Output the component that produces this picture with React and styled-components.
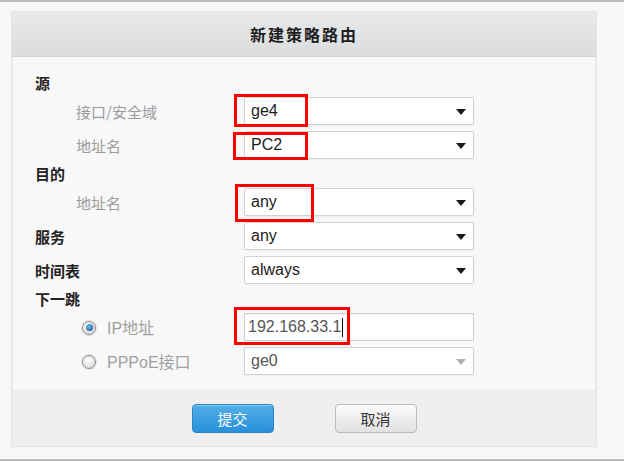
import React from 'react';
import styled, { createGlobalStyle } from 'styled-components';

const GlobalStyle = createGlobalStyle`
  html, body {
    margin: 0;
    padding: 0;
    background: #f7f7f7;
  }
  body {
    font-family: 'Liberation Sans', 'Noto Sans CJK SC', sans-serif;
  }
`;

const Page = styled.div`
  width: 624px;
  height: 461px;
  box-sizing: border-box;
  border-top: 2px solid #bdbdbd;
  border-bottom: 2px solid #bdbdbd;
  padding: 9px 0 0 11px;
  background: #f7f7f7;
`;

const Dialog = styled.div`
  width: 586px;
  height: 436px;
  box-sizing: border-box;
  border: 1px solid #e6e6e6;
  display: flex;
  flex-direction: column;
  background: #f8f8f8;
`;

const Header = styled.div`
  height: 44px;
  flex: none;
  display: flex;
  align-items: center;
  justify-content: center;
  background: linear-gradient(#e8e9eb, #dbdcde);
  border-bottom: 1px solid #d3d3d3;
  font-family: 'Noto Sans CJK SC', sans-serif;
  font-weight: 700;
  font-size: 16px;
  letter-spacing: 2px;
  color: #1e1e1e;
`;

const Body = styled.div`
  flex: 1;
  padding: 10px 0 0 22px;
  border-left: 1px solid #ececec;
  border-right: 1px solid #ececec;
`;

const SectionTitle = styled.div`
  height: ${p => p.$h}px;
  display: flex;
  align-items: center;
  font-family: 'Noto Sans CJK SC', sans-serif;
  font-weight: 700;
  font-size: 15px;
  color: #222;
`;

const FieldRow = styled.div`
  height: 28px;
  display: flex;
  align-items: center;

  & + & {
    margin-top: 6px;
  }
`;

const Label = styled.div`
  width: 209px;
  flex: none;
  box-sizing: border-box;
  padding-left: ${p => (p.$sub ? 41 : 0)}px;
  font-family: 'Noto Sans CJK SC', sans-serif;
  font-weight: ${p => (p.$sub ? 400 : 700)};
  font-size: 15px;
  color: ${p => (p.$sub ? '#9b9b9b' : '#222')};
`;

const RadioLabel = styled.label`
  width: 209px;
  flex: none;
  box-sizing: border-box;
  padding-left: 47px;
  display: flex;
  align-items: center;
  gap: 11px;
  font-family: 'Liberation Sans', 'Noto Sans CJK SC', sans-serif;
  font-size: 16px;
  color: #a0a0a0;
`;

const Radio = styled.span`
  width: 14px;
  height: 14px;
  flex: none;
  border-radius: 50%;
  box-sizing: border-box;
  border: 1px solid #8c8c8c;
  background: radial-gradient(circle at 40% 35%, #ffffff, #cfcfcf);
  box-shadow: 0 0 0 1px #e2e2e2;
  display: flex;
  align-items: center;
  justify-content: center;
  margin-top: 1px;

  &::after {
    content: '';
    display: ${p => (p.$checked ? 'block' : 'none')};
    width: 7px;
    height: 7px;
    border-radius: 50%;
    background: radial-gradient(circle at 40% 35%, #6cc0f5, #0b4a8c);
  }
`;

const Control = styled.div`
  position: relative;
  width: 230px;
  height: 28px;
`;

const Select = styled.div`
  width: 100%;
  height: 100%;
  box-sizing: border-box;
  border: 1px solid #d2d2d2;
  border-radius: 2px;
  background: #fff;
  box-shadow: 0 1px 1px rgba(0, 0, 0, 0.04);
  display: flex;
  align-items: center;
  justify-content: space-between;
  padding: 0 7px 0 6px;
  font-size: 16px;
  color: ${p => (p.$disabled ? '#555' : '#1c1c1c')};
`;

const Arrow = styled.span`
  width: 0;
  height: 0;
  border-left: 5px solid transparent;
  border-right: 5px solid transparent;
  border-top: 6px solid ${p => (p.$disabled ? '#b0b0b0' : '#1a1a1a')};
  margin-top: 1px;
`;

const TextInput = styled.div`
  width: 100%;
  height: 100%;
  box-sizing: border-box;
  border: 1px solid #cfcfcf;
  background: #fff;
  box-shadow: inset 0 1px 1px rgba(0, 0, 0, 0.06);
  display: flex;
  align-items: center;
  padding-left: 3px;
  font-size: 16px;
  color: #555;
`;

const Caret = styled.span`
  width: 1px;
  height: 19px;
  background: #111;
  margin-left: 1px;
`;

const Highlight = styled.span`
  position: absolute;
  left: ${p => p.$l}px;
  top: ${p => p.$t}px;
  width: ${p => p.$w}px;
  height: ${p => p.$h}px;
  box-sizing: border-box;
  border: 3px solid #ff0000;
  pointer-events: none;
`;

const Footer = styled.div`
  height: 55px;
  flex: none;
  display: flex;
  align-items: center;
  justify-content: center;
  gap: 61px;
  background: #efefef;
  border-top: 1px solid #e9e9e9;
`;

const Button = styled.button`
  width: 82px;
  height: 29px;
  border-radius: 4px;
  font-family: 'Noto Sans CJK SC', sans-serif;
  font-size: 15px;
  cursor: pointer;
  border: 1px solid ${p => (p.$primary ? '#2b84c9' : '#bdbdbd')};
  background: ${p =>
    p.$primary
      ? 'linear-gradient(#52afe8, #2990d9)'
      : 'linear-gradient(#fbfbfb, #e1e1e1)'};
  color: ${p => (p.$primary ? '#fff' : '#333')};
  box-shadow: inset 0 1px 0 rgba(255, 255, 255, 0.35);
`;

const Dropdown = ({ value, disabled, mark }) => (
  <Control>
    <Select $disabled={disabled}>
      <span>{value}</span>
      <Arrow $disabled={disabled} />
    </Select>
    {mark && <Highlight $l={mark[0]} $t={mark[1]} $w={mark[2]} $h={mark[3]} />}
  </Control>
);

const App = () => (
  <Page>
    <GlobalStyle />
    <Dialog>
      <Header>新建策略路由</Header>
      <Body>
        <SectionTitle $h={30}>源</SectionTitle>
        <FieldRow>
          <Label $sub>接口/安全域</Label>
          <Dropdown value="ge4" mark={[-10, -3, 74, 33]} />
        </FieldRow>
        <FieldRow>
          <Label $sub>地址名</Label>
          <Dropdown value="PC2" mark={[-11, 1, 75, 28]} />
        </FieldRow>

        <SectionTitle $h={29}>目的</SectionTitle>
        <FieldRow>
          <Label $sub>地址名</Label>
          <Dropdown value="any" mark={[-9, -4, 79, 38]} />
        </FieldRow>
        <FieldRow>
          <Label>服务</Label>
          <Dropdown value="any" />
        </FieldRow>
        <FieldRow>
          <Label>时间表</Label>
          <Dropdown value="always" />
        </FieldRow>

        <SectionTitle $h={29}>下一跳</SectionTitle>
        <FieldRow>
          <RadioLabel>
            <Radio $checked />
            IP地址
          </RadioLabel>
          <Control>
            <TextInput>
              192.168.33.1
              <Caret />
            </TextInput>
            <Highlight $l={-10} $t={-6} $w={116} $h={38} />
          </Control>
        </FieldRow>
        <FieldRow>
          <RadioLabel>
            <Radio />
            PPPoE接口
          </RadioLabel>
          <Dropdown value="ge0" disabled />
        </FieldRow>
      </Body>
      <Footer>
        <Button $primary>提交</Button>
        <Button>取消</Button>
      </Footer>
    </Dialog>
  </Page>
);

export default App;
